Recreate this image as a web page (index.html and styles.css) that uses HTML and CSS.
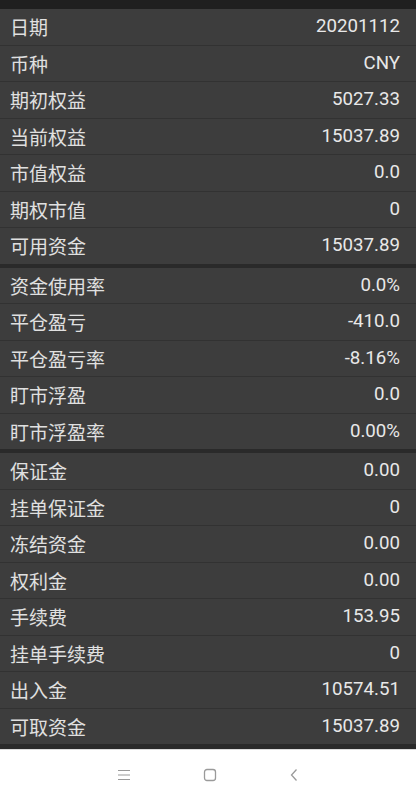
FILE: index.html
```html
<!DOCTYPE html>
<html lang="zh-CN">
<head>
<meta charset="utf-8">
<title>资金</title>
<link rel="stylesheet" href="styles.css">
</head>
<body>
<div class="screen">
  <div class="statusbar"></div>
  <div class="list">
    <section class="group">
      <div class="row"><span class="label">日期</span><span class="value">20201112</span></div>
      <div class="row"><span class="label">币种</span><span class="value">CNY</span></div>
      <div class="row"><span class="label">期初权益</span><span class="value">5027.33</span></div>
      <div class="row"><span class="label">当前权益</span><span class="value">15037.89</span></div>
      <div class="row"><span class="label">市值权益</span><span class="value">0.0</span></div>
      <div class="row"><span class="label">期权市值</span><span class="value">0</span></div>
      <div class="row"><span class="label">可用资金</span><span class="value">15037.89</span></div>
    </section>
    <section class="group">
      <div class="row"><span class="label">资金使用率</span><span class="value">0.0%</span></div>
      <div class="row"><span class="label">平仓盈亏</span><span class="value">-410.0</span></div>
      <div class="row"><span class="label">平仓盈亏率</span><span class="value">-8.16%</span></div>
      <div class="row"><span class="label">盯市浮盈</span><span class="value">0.0</span></div>
      <div class="row"><span class="label">盯市浮盈率</span><span class="value">0.00%</span></div>
    </section>
    <section class="group">
      <div class="row"><span class="label">保证金</span><span class="value">0.00</span></div>
      <div class="row"><span class="label">挂单保证金</span><span class="value">0</span></div>
      <div class="row"><span class="label">冻结资金</span><span class="value">0.00</span></div>
      <div class="row"><span class="label">权利金</span><span class="value">0.00</span></div>
      <div class="row"><span class="label">手续费</span><span class="value">153.95</span></div>
      <div class="row"><span class="label">挂单手续费</span><span class="value">0</span></div>
      <div class="row"><span class="label">出入金</span><span class="value">10574.51</span></div>
      <div class="row"><span class="label">可取资金</span><span class="value">15037.89</span></div>
    </section>
  </div>
  <nav class="navbar">
    <svg class="nav-icon" width="14" height="12" viewBox="0 0 14 12"><path d="M1 1.5H13M1 6H13M1 10.5H13" stroke="#9a9a9a" stroke-width="1.2" fill="none"/></svg>
    <svg class="nav-icon" width="14" height="14" viewBox="0 0 14 14"><rect x="1.5" y="1.5" width="11" height="11" rx="2.5" stroke="#9a9a9a" stroke-width="1.3" fill="none"/></svg>
    <svg class="nav-icon" width="10" height="14" viewBox="0 0 10 14"><path d="M7.5 1.5L2.5 7L7.5 12.5" stroke="#9a9a9a" stroke-width="1.3" fill="none"/></svg>
  </nav>
</div>
</body>
</html>
```
FILE: styles.css
```css
* { box-sizing: border-box; }
html, body { margin: 0; padding: 0; }
body {
  width: 416px;
  height: 800px;
  background: #ffffff;
  font-family: Roboto, "Noto Sans CJK SC", sans-serif;
  overflow: hidden;
}
.screen {
  display: flex;
  flex-direction: column;
  height: 800px;
}
.statusbar {
  height: 9px;
  flex: none;
  background: #1f1f1f;
}
.list {
  flex: none;
  display: flex;
  flex-direction: column;
  gap: 4px;
  background: #2a2a2a;
  padding-bottom: 5px;
}
.group {
  display: flex;
  flex-direction: column;
  gap: 1px;
  background: #323232;
}
.row {
  height: 35.5px;
  display: flex;
  align-items: center;
  justify-content: space-between;
  padding: 0 16px 0 10px;
  background: #3d3d3d;
}
.label {
  font-family: "Noto Sans CJK SC", sans-serif;
  font-size: 19px;
  line-height: 1;
  color: #e0e0e0;
}
.value {
  font-family: Roboto, sans-serif;
  font-size: 18.7px;
  line-height: 1;
  color: #e8e8e8;
}
.navbar {
  flex: 1;
  display: flex;
  align-items: center;
  justify-content: center;
  gap: 72px;
  background: #ffffff;
  border-top: 1px solid #dcdcdc;
}
.nav-icon { display: block; }
```
